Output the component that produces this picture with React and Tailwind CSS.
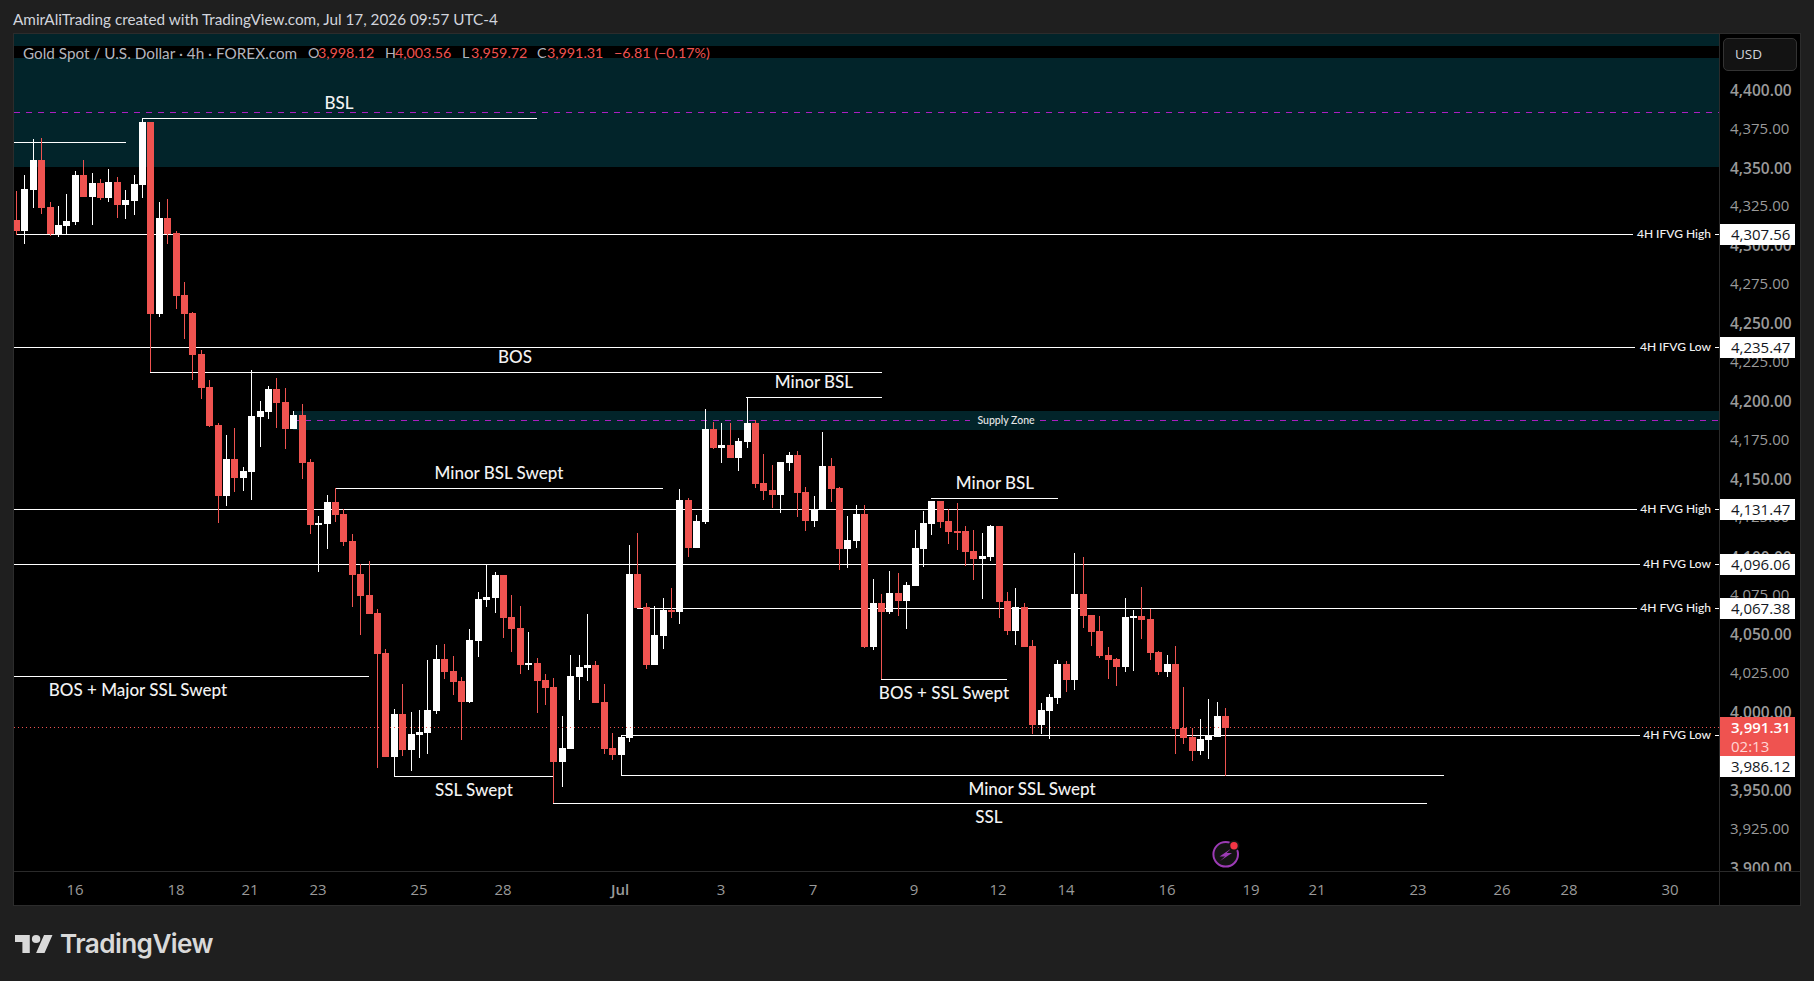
const RED = '#ef5350'

// candle groups: coordinates read off the chart, [x, colour, high, bodyTop, bodyBottom, low]
const GROUPS = [
  { ox: 10, oy: 125, rows: [
    [19, 'r', 198, 285, 318, 330], [43, 'w', 150, 192, 318, 357], [70, 'w', 42, 105, 195, 249], [94, 'r', 39, 105, 249, 267],
    [121, 'r', 231, 246, 327, 333], [145, 'w', 243, 300, 330, 336], [169, 'w', 207, 288, 303, 328], [196, 'w', 138, 150, 291, 300],
    [220, 'r', 105, 150, 216, 216], [247, 'w', 144, 174, 216, 300], [271, 'r', 162, 174, 219, 225], [295, 'w', 132, 171, 219, 231],
    [322, 'r', 156, 171, 240, 279], [346, 'w', 195, 225, 240, 282], [373, 'w', 150, 177, 228, 270], [397, 'w', -20, -10, 180, 219],
    [421, 'r', -10, -10, 567, 742], [448, 'w', 231, 279, 567, 576], [472, 'r', 222, 279, 327, 357], [499, 'r', 318, 324, 513, 552],
    [523, 'r', 471, 510, 567, 642], [547, 'r', 561, 564, 690, 765], [574, 'r', 675, 687, 789, 822], [598, 'r', 765, 786, 903, 906],
    [625, 'r', 894, 900, 1113, 1194], [649, 'w', 930, 1002, 1113, 1143], [673, 'r', 909, 1002, 1059, 1101], [700, 'w', 1026, 1038, 1059, 1098],
    [724, 'w', 735, 873, 1041, 1125], [751, 'w', 828, 858, 876, 966], [775, 'w', 783, 792, 861, 882],
  ] },
  { ox: 260, oy: 400, rows: [
    [50, 'r', -66, -33, 9, 83], [76, 'r', -36, 6, 87, 147], [100, 'w', 33, 45, 87, 87], [127, 'r', 12, 45, 189, 237],
    [151, 'r', 177, 186, 375, 402], [175, 'w', 348, 369, 375, 516], [202, 'w', 285, 306, 372, 447], [226, 'r', 264, 306, 345, 366],
    [250, 'r', 327, 342, 426, 438], [277, 'r', 402, 423, 525, 621], [301, 'r', 492, 522, 588, 705], [328, 'r', 483, 585, 642, 642],
    [352, 'r', 627, 639, 762, 1104], [376, 'r', 747, 759, 1071, 1071], [403, 'w', 927, 942, 1071, 1130], [427, 'r', 852, 942, 1050, 1068],
    [454, 'w', 936, 1002, 1050, 1113], [478, 'w', 930, 996, 1005, 1074], [502, 'w', 780, 930, 999, 1062], [529, 'w', 735, 777, 933, 942],
    [553, 'r', 732, 777, 816, 837], [580, 'r', 768, 813, 846, 885], [604, 'r', 831, 843, 906, 1020], [628, 'w', 687, 720, 906, 909],
    [655, 'w', 576, 597, 723, 771], [679, 'w', 495, 591, 600, 621], [706, 'w', 516, 525, 594, 639], [730, 'r', 525, 525, 654, 714],
    [754, 'r', 585, 651, 687, 756],
  ] },
  { ox: 515, oy: 400, rows: [
    [16, 'r', 618, 684, 795, 822], [40, 'w', 696, 789, 795, 810], [67, 'r', 774, 789, 843, 939], [91, 'r', 822, 840, 864, 915],
    [115, 'r', 834, 861, 1086, 1209], [142, 'w', 948, 1044, 1086, 1161], [166, 'w', 765, 828, 1047, 1047], [193, 'w', 765, 801, 831, 900],
    [217, 'w', 642, 795, 804, 843], [241, 'r', 783, 795, 909, 909], [268, 'r', 852, 906, 1047, 1062], [292, 'r', 999, 1044, 1065, 1080],
    [319, 'w', 1005, 1011, 1065, 1127], [343, 'w', 435, 522, 1014, 1026], [367, 'r', 399, 522, 624, 624], [394, 'r', 609, 621, 795, 807],
    [418, 'w', 618, 705, 795, 795], [445, 'w', 594, 630, 708, 747], [469, 'r', 564, 630, 636, 654], [493, 'w', 267, 300, 636, 672],
    [520, 'r', 294, 300, 444, 471], [544, 'w', 345, 363, 444, 444], [571, 'w', 27, 87, 366, 372], [595, 'r', 66, 87, 144, 147],
    [619, 'w', 69, 135, 144, 189], [646, 'r', 69, 135, 174, 174], [670, 'w', 114, 123, 174, 213], [697, 'w', -8, 69, 126, 144],
    [721, 'r', 60, 69, 252, 264], [745, 'r', 162, 249, 273, 300],
  ] },
  { ox: 770, oy: 420, rows: [
    [7, 'r', 135, 210, 225, 264], [31, 'w', 126, 126, 225, 279], [58, 'w', 96, 105, 129, 153], [82, 'r', 93, 105, 219, 291],
    [106, 'r', 201, 216, 303, 333], [133, 'w', 228, 267, 303, 321], [157, 'w', 36, 138, 267, 267], [184, 'r', 114, 138, 207, 246],
    [208, 'r', 201, 204, 387, 450], [232, 'w', 288, 360, 387, 444], [259, 'w', 255, 282, 363, 384], [283, 'r', 255, 282, 681, 684],
    [310, 'w', 477, 549, 681, 690], [334, 'r', 522, 549, 576, 778], [358, 'w', 453, 519, 576, 582], [385, 'r', 459, 519, 543, 588],
    [409, 'w', 486, 495, 543, 627], [436, 'w', 330, 384, 498, 498], [460, 'w', 273, 309, 387, 441], [484, 'w', 243, 243, 312, 345],
    [511, 'r', 243, 243, 306, 324], [535, 'r', 267, 303, 336, 372], [562, 'r', 249, 333, 336, 390], [586, 'r', 318, 333, 396, 438],
    [610, 'r', 330, 393, 417, 480], [637, 'w', 339, 408, 417, 537], [661, 'w', 315, 318, 411, 423], [688, 'r', 318, 318, 546, 594],
  ] },
  { ox: 1000, oy: 530, rows: [
    [22, 'r', 186, 213, 303, 315], [46, 'w', 174, 231, 303, 345], [73, 'r', 219, 231, 351, 351], [97, 'r', 330, 348, 585, 612],
    [124, 'w', 519, 540, 585, 612], [148, 'w', 492, 501, 543, 627], [172, 'w', 390, 402, 504, 522], [199, 'r', 393, 402, 450, 486],
    [223, 'w', 69, 192, 450, 480], [250, 'r', 81, 192, 258, 294], [274, 'r', 255, 255, 306, 348], [298, 'r', 258, 303, 378, 384],
    [325, 'r', 351, 375, 390, 447], [349, 'r', 384, 387, 411, 468], [376, 'w', 204, 261, 411, 426], [400, 'w', 240, 258, 261, 423],
    [424, 'r', 171, 258, 270, 327], [451, 'r', 237, 267, 369, 390], [475, 'r', 363, 366, 426, 435], [502, 'w', 375, 402, 426, 441],
    [526, 'r', 348, 402, 597, 672], [550, 'r', 471, 594, 624, 642], [577, 'r', 594, 621, 663, 693], [601, 'w', 567, 627, 663, 675],
    [625, 'w', 507, 618, 630, 687], [652, 'w', 516, 558, 621, 621], [676, 'r', 534, 558, 594, 738],
  ] },
]

const candles = GROUPS.flatMap(({ ox, oy, rows }) =>
  rows.map(([x, c, hi, top, bot, lo]) => ({
    x: Math.floor(ox + x / 3),
    fill: c === 'r' ? RED : '#ffffff',
    hi: Math.round(oy + hi / 3),
    top: Math.round(oy + top / 3),
    bot: Math.round(oy + bot / 3),
    lo: Math.round(oy + lo / 3),
  }))
)

// drawn lines: [x1, x2, y]
const LINES = [
  [14, 126, 142], [142, 537, 118], [16, 1633, 234], [14, 1635, 347], [150, 882, 372], [746, 882, 397],
  [335, 663, 488], [931, 1058, 498], [14, 1637, 509], [14, 1640, 564], [637, 1637, 608], [14, 369, 676],
  [881, 1007, 679], [621, 1640, 735], [394, 553, 776], [621, 1444, 775], [553, 1427, 803],
]

const LABELS = [
  { text: 'BSL', x: 339, y: 103 },
  { text: 'BOS', x: 515, y: 357 },
  { text: 'Minor BSL', x: 814, y: 382 },
  { text: 'Minor BSL Swept', x: 499, y: 473 },
  { text: 'Minor BSL', x: 995, y: 483 },
  { text: 'BOS + Major SSL Swept', x: 138, y: 690 },
  { text: 'BOS + SSL Swept', x: 944, y: 693 },
  { text: 'SSL Swept', x: 474, y: 790 },
  { text: 'Minor SSL Swept', x: 1032, y: 789 },
  { text: 'SSL', x: 989, y: 817 },
]

const LINE_TAGS = [
  { text: '4H IFVG High', y: 234 },
  { text: '4H IFVG Low', y: 347 },
  { text: '4H FVG High', y: 509 },
  { text: '4H FVG Low', y: 564 },
  { text: '4H FVG High', y: 608 },
  { text: '4H FVG Low', y: 735 },
]

const PRICES = [
  ['4,400.00', 1], ['4,375.00', 0], ['4,350.00', 1], ['4,325.00', 0], ['4,300.00', 1], ['4,275.00', 0], ['4,250.00', 1],
  ['4,225.00', 0], ['4,200.00', 1], ['4,175.00', 0], ['4,150.00', 1], ['4,125.00', 0], ['4,100.00', 1], ['4,075.00', 0],
  ['4,050.00', 1], ['4,025.00', 0], ['4,000.00', 1], ['3,975.00', 0], ['3,950.00', 1], ['3,925.00', 0], ['3,900.00', 1],
]

const FLAGS = [
  { text: '4,307.56', y: 224 },
  { text: '4,235.47', y: 337 },
  { text: '4,131.47', y: 499 },
  { text: '4,096.06', y: 554 },
  { text: '4,067.38', y: 598 },
  { text: '3,986.12', y: 756 },
]

const DATES = [
  ['16', 75], ['18', 176], ['21', 250], ['23', 318], ['25', 419], ['28', 503], ['Jul', 620], ['3', 721], ['7', 813],
  ['9', 914], ['12', 998], ['14', 1066], ['16', 1167], ['19', 1251], ['21', 1317], ['23', 1418], ['26', 1502], ['28', 1569], ['30', 1670],
]

function ChartDrawing() {
  return (
    <svg className="absolute inset-0 block" width="1705" height="837" viewBox="14 34 1705 837" shapeRendering="crispEdges">
      {/* zones */}
      <rect x="14" y="34" width="1705" height="133" fill="#02242a" />
      <rect x="14" y="46" width="1705" height="12" fill="#000000" />
      <rect x="293" y="411" width="1426" height="19" fill="#02242a" />
      <line x1="14" x2="1719" y1="112.5" y2="112.5" stroke="#ab1fc0" strokeDasharray="6 6" />
      <line x1="293" x2="970" y1="420.5" y2="420.5" stroke="#ab1fc0" strokeDasharray="6 6" />
      <line x1="1040" x2="1719" y1="420.5" y2="420.5" stroke="#ab1fc0" strokeDasharray="6 6" />

      {LINES.map(([x1, x2, y], i) => (
        <rect key={i} x={x1} y={y} width={x2 - x1} height="1" fill="#ffffff" />
      ))}
      <rect x="142" y="118" width="1" height="4" fill="#ffffff" />

      {candles.map((c, i) => (
        <g key={i}>
          <rect x={c.x} y={c.hi} width="1" height={Math.max(c.lo - c.hi, 1)} fill={c.fill} />
          <rect x={c.x - 3} y={c.top} width="7" height={Math.max(c.bot - c.top, 2)} fill={c.fill} />
        </g>
      ))}

      {/* last price */}
      <line x1="14" x2="1719" y1="727.5" y2="727.5" stroke={RED} strokeDasharray="1 3" />

      {/* replay marker */}
      <g shapeRendering="auto">
        <circle cx="1225.7" cy="854.3" r="12.3" fill="#131313" stroke="#9c3bb5" strokeWidth="2" />
        <path d="M1232 848 L1219.5 856.5 L1225 856.5 L1220 861 L1232 853 L1226.5 853 Z" fill="#9c3bb5" />
        <circle cx="1234" cy="845.7" r="5.5" fill="#131313" />
        <circle cx="1234" cy="845.7" r="3.7" fill="#f23645" />
      </g>
    </svg>
  )
}

function PriceAxis() {
  return (
    <div className="relative w-[81px] shrink-0 overflow-hidden border-l border-[#2a2a2a] bg-black font-['Open_Sans',sans-serif] text-[15px] text-[#9a9a9a]">
      <div className="flex flex-col pt-[37px] pl-[10px]">
        {PRICES.map(([p, bold]) => (
          <div key={p} className={`flex h-[38.9px] shrink-0 items-center ${bold ? 'text-[15.5px] font-semibold' : 'pb-[3px]'}`}>{p}</div>
        ))}
      </div>

      <div className="absolute top-[4px] left-[3px] flex h-[33px] w-[74px] items-center rounded-[5px] border border-[#333333] bg-[#131313] pl-[11px] text-[13.5px] text-[#d1d4dc]">USD</div>

      {FLAGS.map((f) => (
        <div key={f.text} className="absolute left-0 flex h-[21px] w-[75px] items-center bg-white pl-[11px] pb-px text-[#131722]" style={{ top: f.y - 34 }}>{f.text}</div>
      ))}
      <div className="absolute top-[683px] left-0 flex h-[39px] w-[75px] flex-col justify-center bg-[#ef5350] pl-[11px] leading-[19px]">
        <span className="font-semibold text-white">3,991.31</span>
        <span className="text-[#ffd5d4]">02:13</span>
      </div>
    </div>
  )
}

export default function App() {
  return (
    <div className="flex h-[981px] w-[1814px] flex-col overflow-hidden bg-[#1f1f1f] font-['Lato',sans-serif]">
      <div className="flex h-[33px] shrink-0 items-center pt-[5px] pl-[13px] text-[15.3px] text-[#d1d4dc]">
        AmirAliTrading created with TradingView.com, Jul 17, 2026 09:57 UTC-4
      </div>

      <div className="ml-[13px] flex h-[873px] w-[1788px] shrink-0 flex-col border border-[#2c2c2c]">
        <div className="flex h-[837px] shrink-0">
          <div className="relative flex-1 overflow-hidden bg-black">
            <ChartDrawing />

            {/* legend */}
            <div className="absolute top-[9px] left-[9px] flex h-[20px] items-center text-[14.3px] whitespace-nowrap text-[#b2b5be]">
              <span className="w-[285px] text-[15.3px]">Gold Spot / U.S. Dollar · 4h · FOREX.com</span>
              <span className="w-[10px]">O</span><span className="w-[67px] text-[#ef5350]">3,998.12</span>
              <span className="w-[10px]">H</span><span className="w-[67px] text-[#ef5350]">4,003.56</span>
              <span className="w-[9px]">L</span><span className="w-[66px] text-[#ef5350]">3,959.72</span>
              <span className="w-[10px]">C</span><span className="w-[67px] text-[#ef5350]">3,991.31</span>
              <span className="text-[#ef5350]">−6.81 (−0.17%)</span>
            </div>

            {LABELS.map((l, i) => (
              <div key={i} className="absolute -translate-x-1/2 -translate-y-1/2 text-[17px] font-medium whitespace-nowrap text-[#f2f2f2]" style={{ left: l.x - 14, top: l.y - 34 }}>{l.text}</div>
            ))}

            <div className="absolute top-[387px] left-[992px] -translate-x-1/2 -translate-y-1/2 text-[10.5px] font-medium whitespace-nowrap text-[#e6e6e6]">Supply Zone</div>

            {LINE_TAGS.map((t, i) => (
              <div key={i} className="absolute right-0 flex -translate-y-1/2 items-center gap-[4px] text-[12px] font-medium whitespace-nowrap text-[#f2f2f2]" style={{ top: t.y - 34 }}>
                {t.text}
                <span className="h-px w-[4px] bg-white" />
              </div>
            ))}
          </div>
          <PriceAxis />
        </div>

        <div className="flex h-[34px] shrink-0 border-t border-[#2a2a2a]">
          <div className="relative flex-1 bg-black font-['Open_Sans',sans-serif] text-[15px] text-[#9a9a9a]">
            {DATES.map(([d, x]) => (
              <span key={`${d}-${x}`} className={`absolute top-1/2 -translate-x-1/2 -translate-y-1/2 ${d === 'Jul' ? 'font-semibold' : ''}`} style={{ left: x - 14 }}>{d}</span>
            ))}
          </div>
          <div className="w-[81px] shrink-0 border-l border-[#2a2a2a] bg-black" />
        </div>
      </div>

      {/* footer logo */}
      <div className="flex flex-1 items-center gap-[7px] pl-[15px] text-[#d9d9d9]">
        <svg width="38" height="20" viewBox="0 3 36 20" fill="currentColor" preserveAspectRatio="none">
          <path d="M14 22H7V11H0V4h14v18zM28 22h-8l7.5-18h8L28 22z" />
          <circle cx="20" cy="8" r="4" />
        </svg>
        <span className="font-['Inter',sans-serif] text-[26.2px] font-semibold tracking-[-0.6px]">TradingView</span>
      </div>
    </div>
  )
}
